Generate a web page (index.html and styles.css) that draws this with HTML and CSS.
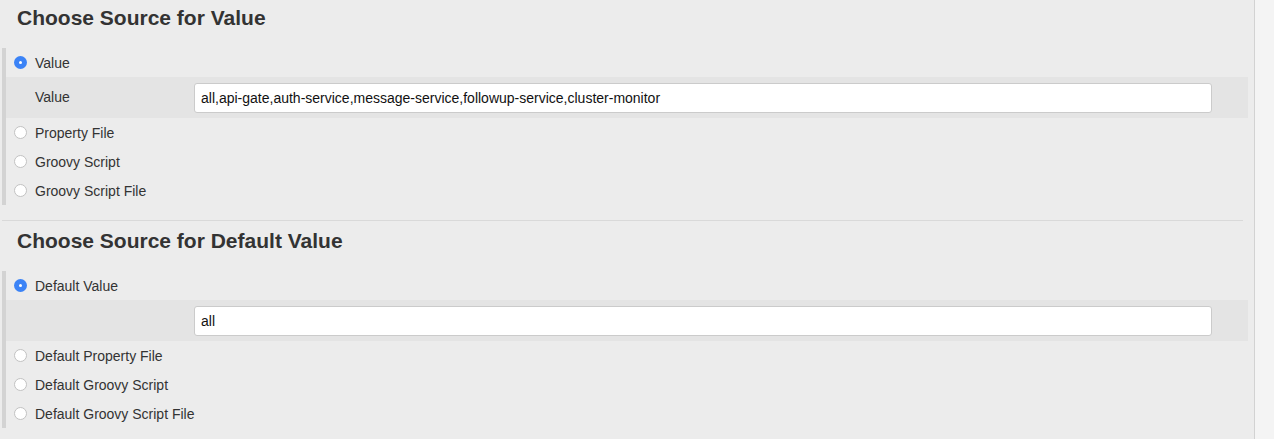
FILE: index.html
```html
<!DOCTYPE html>
<html>
<head>
<meta charset="utf-8">
<link rel="stylesheet" href="styles.css">
</head>
<body>
<div class="page">
  <main class="main">
    <section class="section">
      <h2 class="title">Choose Source for Value</h2>
      <div class="group">
        <div class="opt"><span class="radio on"></span><span class="lbl">Value</span></div>
        <div class="field"><span class="flabel">Value</span><input class="input" type="text" value="all,api-gate,auth-service,message-service,followup-service,cluster-monitor"></div>
        <div class="opt"><span class="radio"></span><span class="lbl">Property File</span></div>
        <div class="opt"><span class="radio"></span><span class="lbl">Groovy Script</span></div>
        <div class="opt"><span class="radio"></span><span class="lbl">Groovy Script File</span></div>
      </div>
    </section>
    <hr class="sep">
    <section class="section second">
      <h2 class="title">Choose Source for Default Value</h2>
      <div class="group">
        <div class="opt"><span class="radio on"></span><span class="lbl">Default Value</span></div>
        <div class="field"><span class="flabel"></span><input class="input" type="text" value="all"></div>
        <div class="opt"><span class="radio"></span><span class="lbl">Default Property File</span></div>
        <div class="opt"><span class="radio"></span><span class="lbl">Default Groovy Script</span></div>
        <div class="opt"><span class="radio"></span><span class="lbl">Default Groovy Script File</span></div>
      </div>
    </section>
  </main>
  <aside class="side"></aside>
</div>
</body>
</html>
```
FILE: styles.css
```css
html, body {
  margin: 0;
  padding: 0;
  height: 100%;
}
body {
  font-family: "Liberation Sans", Arial, Helvetica, sans-serif;
  color: #333;
  background: #ececec;
}
.page {
  display: flex;
  min-height: 439px;
}
.main {
  width: 1255px;
  padding: 6px 0 0 2px;
  box-sizing: border-box;
  border-right: 1px solid #d2d2d2;
}
.side {
  flex: 1;
  background: #f4f4f4;
}
.title {
  margin: 0 0 18px 0;
  padding-left: 15px;
  font-size: 21px;
  line-height: 24px;
  font-weight: bold;
  color: #333;
}
.second .title {
  margin-top: 8px;
}
.group {
  width: 1246px;
  border-left: 4px solid #d3d3d3;
  box-sizing: border-box;
}
.opt {
  display: flex;
  align-items: center;
  height: 29px;
  padding-left: 8px;
}
.radio {
  width: 13px;
  height: 13px;
  box-sizing: border-box;
  border-radius: 50%;
  border: 1px solid #c2c2c2;
  background: #fff;
  margin-right: 8px;
  flex: none;
  position: relative;
}
.radio.on {
  border: none;
  background: #3b83f6;
}
.radio.on::after {
  content: "";
  position: absolute;
  left: 5px;
  top: 5px;
  width: 3px;
  height: 3px;
  border-radius: 50%;
  background: #fff;
}
.lbl {
  font-size: 14px;
  color: #333;
}
.field {
  display: flex;
  align-items: center;
  background: #e4e4e4;
  padding: 6px 36px 5px 29px;
}
.flabel {
  width: 159px;
  flex: none;
  font-size: 14px;
  color: #333;
  margin-bottom: 3px;
}
.input {
  flex: 1;
  height: 30px;
  box-sizing: border-box;
  border: 1px solid #cbcbcb;
  border-radius: 3px;
  background: #fff;
  padding: 0 6px;
  font-family: "Liberation Sans", Arial, Helvetica, sans-serif;
  font-size: 14px;
  color: #111;
  margin: 0;
  outline: none;
}
.sep {
  width: 1241px;
  margin: 15px 0 0 0;
  border: none;
  border-top: 1px solid #d9d9d9;
  height: 0;
}
```
